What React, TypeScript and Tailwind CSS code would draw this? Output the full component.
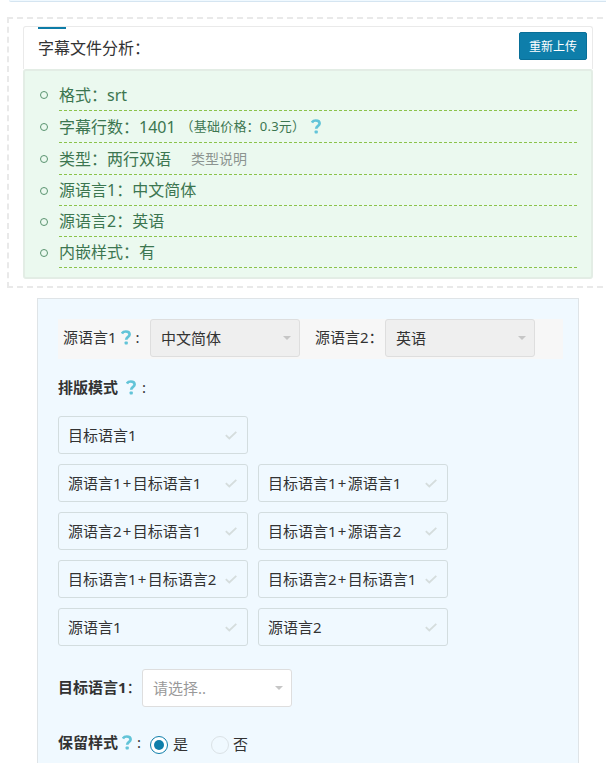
import React from 'react';

const HelpIcon: React.FC<{ className?: string }> = ({ className = '' }) => (
  <svg viewBox="0 0 10 15" className={`h-[15px] w-[10px] shrink-0 ${className}`} fill="none">
    <path d="M0.9 3.6C1.8 1.9 3.2 1.5 4.8 1.5c2.4 0 3.8 1.1 3.8 2.9 0 2.5-3.4 2.5-3.4 5.4" stroke="#62c4d8" strokeWidth="2.7" />
    <rect x="3.6" y="11.4" width="3.2" height="3.2" rx="0.8" fill="#62c4d8" />
  </svg>
);

const CheckIcon = () => (
  <svg viewBox="0 0 12 9" className="h-[9px] w-[12px] shrink-0" fill="none">
    <path d="M0.8 4.2L4.3 7.5L11.3 0.8" stroke="#d5dddd" strokeWidth="1.8" />
  </svg>
);

const SelectBox: React.FC<{ text: string; className: string }> = ({ text, className }) => (
  <div className={`flex h-[38px] w-[150px] shrink-0 items-center justify-between rounded-[3px] border border-[#dedede] pr-[8px] pl-[10px] ${className}`}>
    <span>{text}</span>
    <svg viewBox="0 0 8 4" className="h-[4px] w-[8px]">
      <path d="M0 0h8L4 4z" fill="#c6c6c6" />
    </svg>
  </div>
);

const modes = [
  ['目标语言1'],
  ['源语言1+目标语言1', '目标语言1+源语言1'],
  ['源语言2+目标语言1', '目标语言1+源语言2'],
  ['目标语言1+目标语言2', '目标语言2+目标语言1'],
  ['源语言1', '源语言2'],
];

const ModeOption: React.FC<{ label: string }> = ({ label }) => (
  <div className="flex h-[38px] w-[190px] items-center justify-between rounded-[3px] border border-[#d3dddf] pr-[10px] pl-[9px]">
    <span>
      {label.split('+').map((part, i) => (
        <React.Fragment key={i}>
          {i > 0 && <span className="px-[1.25px]">+</span>}
          {part}
        </React.Fragment>
      ))}
    </span>
    <CheckIcon />
  </div>
);

const details = [
  { text: '格式：srt', height: 'h-[32px]' },
  {
    text: '字幕行数：1401',
    height: 'h-[32px]',
    extra: (
      <>
        <span className="ml-[5px] text-[13px] tracking-[0.2px]">（基础价格：0.3元）</span>
        <HelpIcon className="ml-[6px]" />
      </>
    ),
  },
  {
    text: '类型：两行双语',
    height: 'h-[32px]',
    extra: <span className="ml-[20px] text-sm text-[#8c9490]">类型说明</span>,
  },
  { text: '源语言1：中文简体', height: 'h-[31px]' },
  { text: '源语言2：英语', height: 'h-[31px]' },
  { text: '内嵌样式：有', height: 'h-[31px]' },
];

const App: React.FC = () => {
  return (
    <div className="h-[763px] w-[606px] overflow-hidden bg-white font-['Noto_Sans','Noto_Sans_CJK_SC',sans-serif] text-[15px] whitespace-nowrap text-[#333]">
      <div className="ml-[9px] h-[2px] w-[620px] rounded-bl-[2px] border-b border-[#d5e5f1] bg-[#f0f9ff]" />

      {/* 文件分析 */}
      <div className="mt-[15px] ml-[7px] h-[271px] w-[616px] border-2 border-dashed border-[#e9e9e9] pt-[7px] pl-[14px]">
        <div className="w-[570px]">
          <div className="flex h-[43px] justify-between rounded-t-[3px] border border-b-0 border-[#eaeaea] pr-[5px] pl-[14px]">
            <div>
              <div className="h-[2px] w-[28px] bg-[#0d7ca7]" />
              <div className="mt-[7px] text-base leading-6">字幕文件分析：</div>
            </div>
            <button className="mt-[5px] h-[28px] w-[68px] rounded-[2px] border border-[#086f98] bg-[#0e7eaa] pt-px text-xs text-white">
              重新上传
            </button>
          </div>
          <ul className="h-[210px] rounded-[3px] border-2 border-[#e3ede5] bg-[#ebf9ef] pt-[8px] pr-[14px] pl-[15px] text-base text-[#3c7650]">
            {details.map((d) => (
              <li key={d.text} className={`flex items-center ${d.height}`}>
                <span className="mr-[11px] h-[8px] w-[8px] rounded-full border-[1.5px] border-[#5a9470]" />
                <div className="flex h-full flex-1 items-center border-b border-dashed border-[#8bc34a]">
                  <span>{d.text}</span>
                  {d.extra}
                </div>
              </li>
            ))}
          </ul>
        </div>
      </div>

      {/* 翻译设置 */}
      <div className="mt-[10px] ml-[37px] h-[480px] w-[542px] border border-[#dfe4e7] bg-[#f0f9ff] px-[20px] pt-[20px]">
        <div className="flex h-[40px] w-[505px] items-start bg-[#f7f7f7] pl-[5px]">
          <div className="flex h-[36px] w-[87px] items-center">
            源语言1
            <HelpIcon className="ml-[4px]" />
            <span className="ml-[5px]">:</span>
          </div>
          <SelectBox text="中文简体" className="bg-[#efefef]" />
          <span className="ml-[15px] w-[70px] leading-[36px]">源语言2：</span>
          <SelectBox text="英语" className="bg-[#efefef]" />
        </div>

        <div className="mt-[17px] flex h-[22px] items-center">
          <b>排版模式</b>
          <HelpIcon className="ml-[8px]" />
          <span className="ml-[6px]">:</span>
        </div>

        <div className="mt-[18px] flex flex-col gap-[10px]">
          {modes.map((row) => (
            <div key={row[0]} className="flex gap-[10px]">
              {row.map((label) => (
                <ModeOption key={label} label={label} />
              ))}
            </div>
          ))}
        </div>

        <div className="mt-[23px] flex items-center">
          <div className="w-[84px] pb-[2px]">
            <b>目标语言1</b>：
          </div>
          <SelectBox text="请选择.." className="bg-white text-[#999]" />
        </div>

        <div className="mt-[23px] flex h-[24px] items-center">
          <b>保留样式</b>
          <HelpIcon className="ml-[4px]" />
          <span className="ml-[5px]">:</span>
          <div className="mt-[5px] ml-[9px] flex items-center">
            <span className="flex h-[18px] w-[18px] items-center justify-center rounded-full border border-[#0e7eaa] bg-white">
              <span className="h-[10px] w-[10px] rounded-full bg-[#0e7eaa]" />
            </span>
            <span className="ml-[5px]">是</span>
            <span className="ml-[23px] h-[18px] w-[18px] rounded-full border border-[#dbe2e6]" />
            <span className="ml-[4px]">否</span>
          </div>
        </div>
      </div>
    </div>
  );
};

export default App;
